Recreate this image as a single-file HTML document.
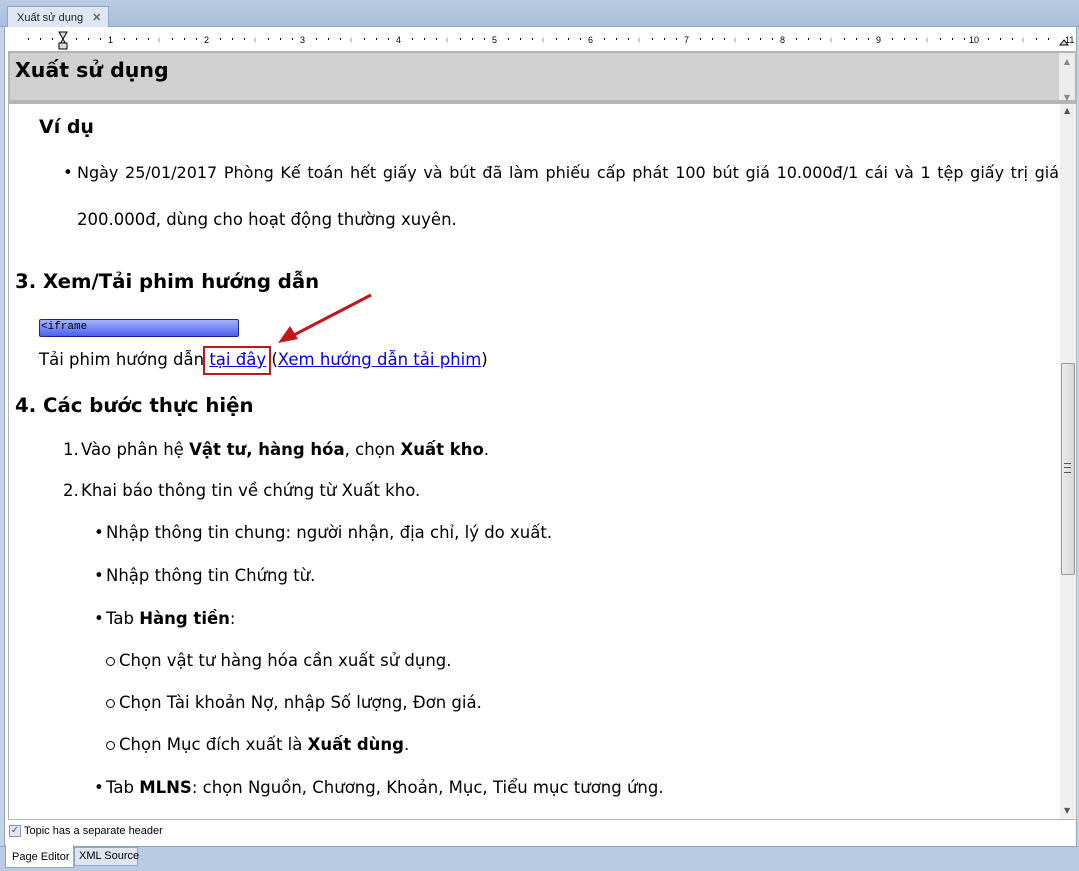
<!DOCTYPE html>
<html><head><meta charset="utf-8"><style>
*{margin:0;padding:0;box-sizing:border-box}
body{width:1079px;height:871px;background:#c4d3e6;position:relative;overflow:hidden;font-family:"DejaVu Sans","Liberation Sans",sans-serif;color:#000}
.a{position:absolute;white-space:nowrap}
.t{font-size:16.5px}
.h{font-weight:bold;font-size:19.7px}
a{color:#0000ee;text-decoration:underline}
</style></head><body>
<div class="a" style="left:0;top:0;width:1079px;height:27px;background:linear-gradient(#b9cbe2,#a9bfdb);border-bottom:1px solid #8ea6c6"></div>
<div class="a" style="left:7px;top:6px;width:102px;height:21px;background:#dde6f2;border:1px solid #8ea6c6;border-bottom:none;font-family:'Liberation Sans',sans-serif;font-size:11px;padding:4px 0 0 9px;color:#222">Xuất sử dụng <span style="margin-left:6px;color:#666;font-weight:bold">✕</span></div>
<div class="a" style="left:4px;top:27px;width:1073px;height:820px;background:#fff;border-left:1px solid #8ea6c6;border-right:1px solid #8ea6c6"></div>
<svg class="a" style="left:0;top:28px" width="1079" height="22">
<text x="108" y="15" font-size="9" font-family="Liberation Sans">1</text>
<text x="204" y="15" font-size="9" font-family="Liberation Sans">2</text>
<text x="300" y="15" font-size="9" font-family="Liberation Sans">3</text>
<text x="396" y="15" font-size="9" font-family="Liberation Sans">4</text>
<text x="492" y="15" font-size="9" font-family="Liberation Sans">5</text>
<text x="588" y="15" font-size="9" font-family="Liberation Sans">6</text>
<text x="684" y="15" font-size="9" font-family="Liberation Sans">7</text>
<text x="780" y="15" font-size="9" font-family="Liberation Sans">8</text>
<text x="876" y="15" font-size="9" font-family="Liberation Sans">9</text>
<text x="969" y="15" font-size="9" font-family="Liberation Sans">10</text>
<text x="1065" y="15" font-size="9" font-family="Liberation Sans">11</text>
<path d="M28 11h1M40 11h1M52 11h1M76 11h1M88 11h1M100 11h1M124 11h1M136 11h1M148 11h1M172 11h1M184 11h1M196 11h1M220 11h1M232 11h1M244 11h1M268 11h1M280 11h1M292 11h1M316 11h1M328 11h1M340 11h1M364 11h1M376 11h1M388 11h1M412 11h1M424 11h1M436 11h1M460 11h1M472 11h1M484 11h1M508 11h1M520 11h1M532 11h1M556 11h1M568 11h1M580 11h1M604 11h1M616 11h1M628 11h1M652 11h1M664 11h1M676 11h1M700 11h1M712 11h1M724 11h1M748 11h1M760 11h1M772 11h1M796 11h1M808 11h1M820 11h1M844 11h1M856 11h1M868 11h1M892 11h1M904 11h1M916 11h1M940 11h1M952 11h1M964 11h1M988 11h1M1000 11h1M1012 11h1M1036 11h1M1048 11h1" stroke="#000" stroke-width="2"/>
<path d="M159 10v4M255 10v4M351 10v4M447 10v4M543 10v4M639 10v4M735 10v4M831 10v4M927 10v4M1023 10v4" stroke="#999"/>
<path d="M59 4h8l-4 7 4 7h-8l4-7z" fill="#ddd" stroke="#000"/>
<rect x="59" y="15" width="8" height="6" fill="#ddd" stroke="#000"/>
<path d="M1060 17l4-5 4 5z" fill="#ddd" stroke="#000"/>
</svg>
<div class="a" style="left:8px;top:51px;width:1069px;height:51px;border:2px solid #b5b5b5;background:#d0d0d0"></div>
<div class="a" style="left:1059px;top:53px;width:16px;height:47px;background:#ececec;color:#888;font-size:8px;text-align:center;line-height:18px">▲<br><br>▼</div>
<div class="a" style="left:15px;top:58px;font-size:20.5px;font-weight:bold">Xuất sử dụng</div>
<div class="a" style="left:8px;top:102px;width:1069px;height:718px;border:1px solid #b5b5b5;border-top:2px solid #b5b5b5"></div>
<div class="a" style="left:1060px;top:104px;width:16px;height:715px;background:#efefef"></div>
<div class="a" style="left:1064px;top:106px;font-size:8px;color:#555">▲</div>
<div class="a" style="left:1064px;top:806px;font-size:8px;color:#555">▼</div>
<div class="a" style="left:1061px;top:363px;width:14px;height:212px;background:linear-gradient(90deg,#ececec,#d8d8d8);border:1px solid #999;border-radius:2px"></div>
<div class="a" style="left:1064px;top:463px;width:7px;height:10px;border-top:1px solid #555;border-bottom:1px solid #555"><div style="border-top:1px solid #555;margin-top:3px"></div></div>
<div class="a h" style="left:39px;top:116px;font-size:19px">Ví dụ</div>
<div class="a t" style="left:63px;top:163px">•</div>
<div class="a t" style="left:77px;top:163px;width:982px;text-align:justify;text-align-last:justify;font-size:16px">Ngày 25/01/2017 Phòng Kế toán hết giấy và bút đã làm phiếu cấp phát 100 bút giá 10.000đ/1 cái và 1 tệp giấy trị giá</div>
<div class="a t" style="left:77px;top:210px">200.000đ, dùng cho hoạt động thường xuyên.</div>
<div class="a h" style="left:15px;top:270px">3. Xem/Tải phim hướng dẫn</div>
<div class="a" style="left:39px;top:319px;width:200px;height:18px;border:1px solid #1a2a8a;border-radius:2px;background:linear-gradient(#a5b4ff,#4b61f0);font-family:'Liberation Mono',monospace;font-size:11px;padding-left:1px;line-height:15px">&lt;iframe</div>
<div class="a t" style="left:39px;top:350px">Tải phim hướng dẫn <a>tại đây</a> (<a>Xem hướng dẫn tải phim</a>)</div>
<div class="a" style="left:203px;top:346px;width:68px;height:29px;border:2px solid #c0161c"></div>
<svg class="a" style="left:270px;top:290px" width="110" height="60"><path d="M101 5L22 46" stroke="#c0161c" stroke-width="3"/><path d="M8 53l12-17 8 13z" fill="#c0161c"/></svg>
<div class="a h" style="left:15px;top:394px">4. Các bước thực hiện</div>
<div class="a t" style="left:63px;top:440px">1.</div><div class="a t" style="left:81px;top:440px">Vào phân hệ <b>Vật tư, hàng hóa</b>, chọn <b>Xuất kho</b>.</div>
<div class="a t" style="left:63px;top:481px">2.</div><div class="a t" style="left:81px;top:481px">Khai báo thông tin về chứng từ Xuất kho.</div>
<div class="a t" style="left:94px;top:523px">•</div><div class="a t" style="left:106px;top:523px">Nhập thông tin chung: người nhận, địa chỉ, lý do xuất.</div>
<div class="a t" style="left:94px;top:566px">•</div><div class="a t" style="left:106px;top:566px">Nhập thông tin Chứng từ.</div>
<div class="a t" style="left:94px;top:609px">•</div><div class="a t" style="left:106px;top:609px">Tab <b>Hàng tiền</b>:</div>
<div class="a" style="left:106px;top:657px;width:9px;height:9px;border:1.3px solid #000;border-radius:50%"></div><div class="a t" style="left:119px;top:651px">Chọn vật tư hàng hóa cần xuất sử dụng.</div>
<div class="a" style="left:106px;top:699px;width:9px;height:9px;border:1.3px solid #000;border-radius:50%"></div><div class="a t" style="left:119px;top:693px">Chọn Tài khoản Nợ, nhập Số lượng, Đơn giá.</div>
<div class="a" style="left:106px;top:741px;width:9px;height:9px;border:1.3px solid #000;border-radius:50%"></div><div class="a t" style="left:119px;top:735px">Chọn Mục đích xuất là <b>Xuất dùng</b>.</div>
<div class="a t" style="left:94px;top:778px">•</div><div class="a t" style="left:106px;top:778px">Tab <b>MLNS</b>: chọn Nguồn, Chương, Khoản, Mục, Tiểu mục tương ứng.</div>
<div class="a" style="left:9px;top:825px;width:12px;height:12px;border:1px solid #8899aa;background:#e4e8f4;font-size:10px;line-height:10px;color:#3050a0;text-align:center">✓</div>
<div class="a" style="left:24px;top:825px;font-family:'Liberation Sans',sans-serif;font-size:11px">Topic has a separate header</div>
<div class="a" style="left:0;top:846px;width:1079px;height:25px;background:#b8cbe3;border-top:1px solid #8ea6c6"></div>
<div class="a" style="left:5px;top:845px;width:69px;height:23px;background:#fff;border:1px solid #8ea6c6;border-top:none;font-family:'Liberation Sans',sans-serif;font-size:11px;padding:6px 0 0 6px">Page Editor</div>
<div class="a" style="left:74px;top:847px;width:64px;height:19px;background:#dde4ee;border:1px solid #8ea6c6;font-family:'Liberation Sans',sans-serif;font-size:11px;padding:2px 0 0 4px">XML Source</div>
</body></html>
